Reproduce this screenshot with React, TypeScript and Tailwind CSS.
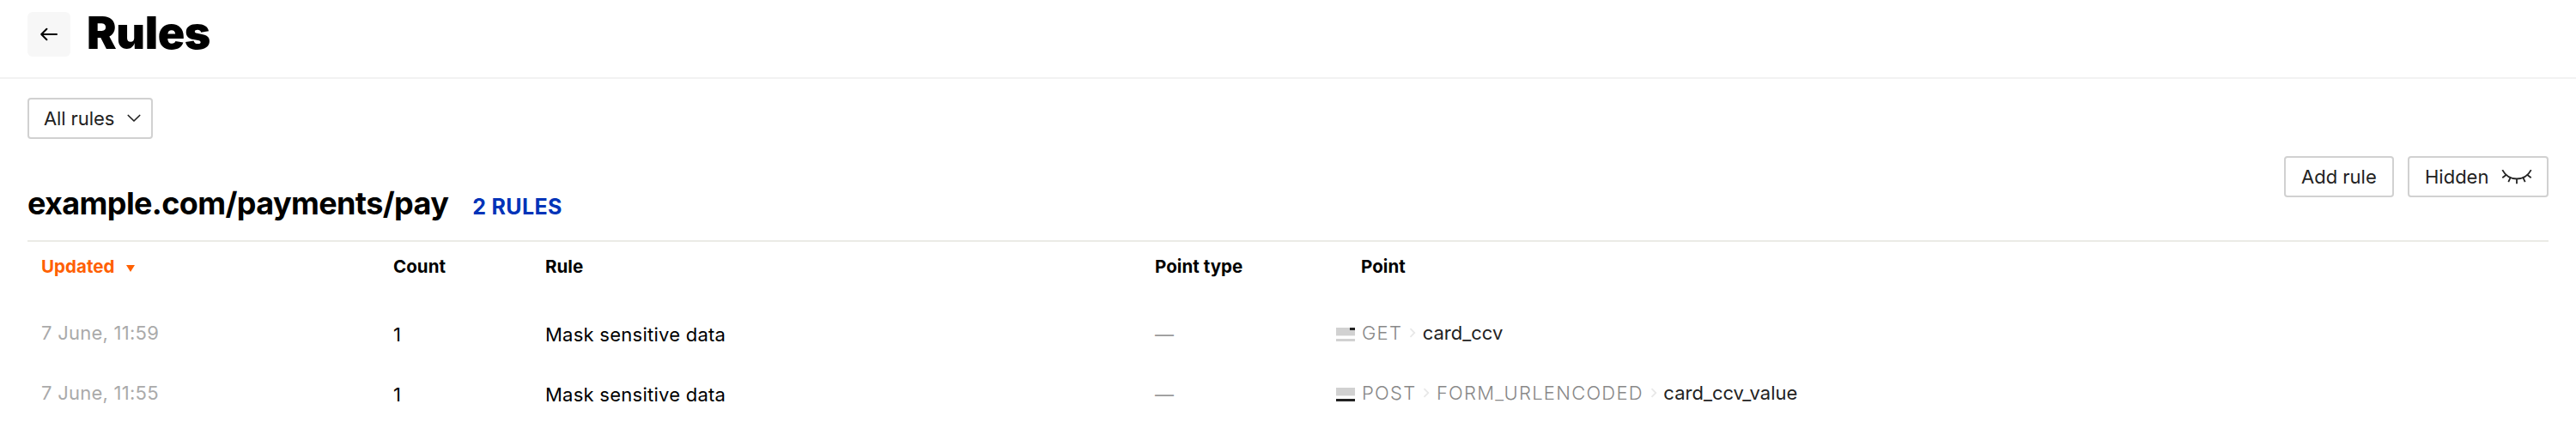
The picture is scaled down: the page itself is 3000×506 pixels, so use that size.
import { ReactNode } from "react";

type Rule = { updated: string; count: number; rule: string; body: boolean; path: string[]; name: string };

const RULES: Rule[] = [
  { updated: "7 June, 11:59", count: 1, rule: "Mask sensitive data", body: false, path: ["GET"], name: "card_ccv" },
  { updated: "7 June, 11:55", count: 1, rule: "Mask sensitive data", body: true, path: ["POST", "FORM_URLENCODED"], name: "card_ccv_value" },
];

const COLUMNS = "grid grid-cols-[410px_177px_710px_211px_1fr] pl-4";

function Button({ children, className }: { children: ReactNode; className: string }) {
  return (
    <button
      className={`flex h-12 items-center rounded-[4px] border-2 border-[#d1d1d1] text-[22px] leading-none text-[#222] ${className}`}
    >
      {children}
    </button>
  );
}

function PointIcon({ body }: { body: boolean }) {
  return (
    <svg className="mt-1" width="22" height="16" viewBox="0 0 22 16" shapeRendering="crispEdges">
      <path d="M0 0h22v9H0z" fill="#d1d1d1" />
      <path d="M0 9h22v1H0z" fill="#ececec" />
      {!body && <path d="M16 0h6v3h-6z" fill="#222" />}
      <path d="M0 13h22v3H0z" fill={body ? "#222" : "#d1d1d1"} />
    </svg>
  );
}

function Separator() {
  return (
    <svg className="mr-[7.5px] ml-2" width="8" height="12" viewBox="0 0 8 12" fill="none" stroke="#e8e8e8" strokeWidth="1.8">
      <path d="M1.5 1.2 6.3 6 1.5 10.8" />
    </svg>
  );
}

export default function App() {
  return (
    <div className="h-[506px] w-full overflow-hidden bg-white font-['Inter',sans-serif] text-black">
      <header className="flex h-[92px] items-start border-b-2 border-[#f2f2f2] pl-8 pt-[14px]">
        <button className="flex h-[52px] w-[50px] items-center justify-center rounded-[6px] bg-[#f7f7f7]">
          <svg width="20" height="16" viewBox="0 0 20 16" fill="none" stroke="#000" strokeWidth="2" strokeLinecap="round" strokeLinejoin="round">
            <path d="M19 8H1.2M7.4 1.8 1.2 8l6.2 6.2" />
          </svg>
        </button>
        <h1 className="ml-[19px] text-[52px] leading-[50px] font-black tracking-[-0.4px]">Rules</h1>
      </header>

      <main className="px-8">
        <div className="pt-[22px]">
          <Button className="w-[146px] pl-[17px]">
            <span className="tracking-[-0.1px]">All rules</span>
            <svg className="ml-[15px]" width="16" height="10" viewBox="0 0 16 10" fill="none" stroke="#222" strokeWidth="1.7" strokeLinecap="round" strokeLinejoin="round">
              <path d="M1.3 1.5 8 8l6.7-6.5" />
            </svg>
          </Button>
        </div>

        <div className="flex h-[120px] justify-between border-b-2 border-[#ebebe6] pt-5">
          <div className="flex items-baseline pt-[33px]">
            <h2 className="text-[36px] leading-[44px] font-bold tracking-[-0.62px]">example.com/payments/pay</h2>
            <span className="ml-[28px] text-[25px] leading-[30px] font-bold tracking-[0.35px] text-[#0033b8]">2 RULES</span>
          </div>
          <div className="flex gap-4">
            <Button className="w-32 pl-[18px]">Add rule</Button>
            <Button className="w-[164px] pl-[18px]">
              <span>Hidden</span>
              <svg className="ml-[15px]" width="36" height="18" viewBox="0 0 36 18" fill="none" stroke="#222" strokeWidth="1.8">
                <path d="M1.3 1.2C4.7 7.7 10.7 11.5 18 11.5s13.3-3.8 16.7-10.3M6.2 6.6 1.3 10.2M10.6 10.1 8.3 15.2M18 11.5v5.8M25.4 10.1l2.3 5.1M29.8 6.6l4.9 3.6" />
              </svg>
            </Button>
          </div>
        </div>

        <div className={`${COLUMNS} h-[71px] items-start pt-[13px] text-[20.5px] leading-8 font-bold tracking-[0.05px]`}>
          <div className="flex items-center text-[#ff6000]">
            Updated
            <svg className="ml-[13.5px] mt-[4px]" width="10" height="8" viewBox="0 0 10 8" fill="currentColor">
              <path d="M0 0h10L5 8z" />
            </svg>
          </div>
          <div>Count</div>
          <div>Rule</div>
          <div>Point type</div>
          <div className="pl-[29px]">Point</div>
        </div>

        {RULES.map((r) => (
          <div key={r.updated} className={`${COLUMNS} h-[70px] items-start pt-[19px] text-[22px] leading-8 tracking-[0.25px]`}>
            <div className="text-[#aaa]">{r.updated}</div>
            <div className="pt-[2px]">{r.count}</div>
            <div className="pt-[2px]">{r.rule}</div>
            <div className="pt-[2px] tracking-normal text-[#999]">—</div>
            <div className="flex items-center text-[#222]">
              <PointIcon body={r.body} />
              <span className="ml-2 flex items-center">
                {r.path.map((p) => (
                  <span key={p} className="flex items-center font-light tracking-[1.25px] text-[#888]">
                    {p}
                    <Separator />
                  </span>
                ))}
                <span className="tracking-normal">{r.name}</span>
              </span>
            </div>
          </div>
        ))}
      </main>
    </div>
  );
}
